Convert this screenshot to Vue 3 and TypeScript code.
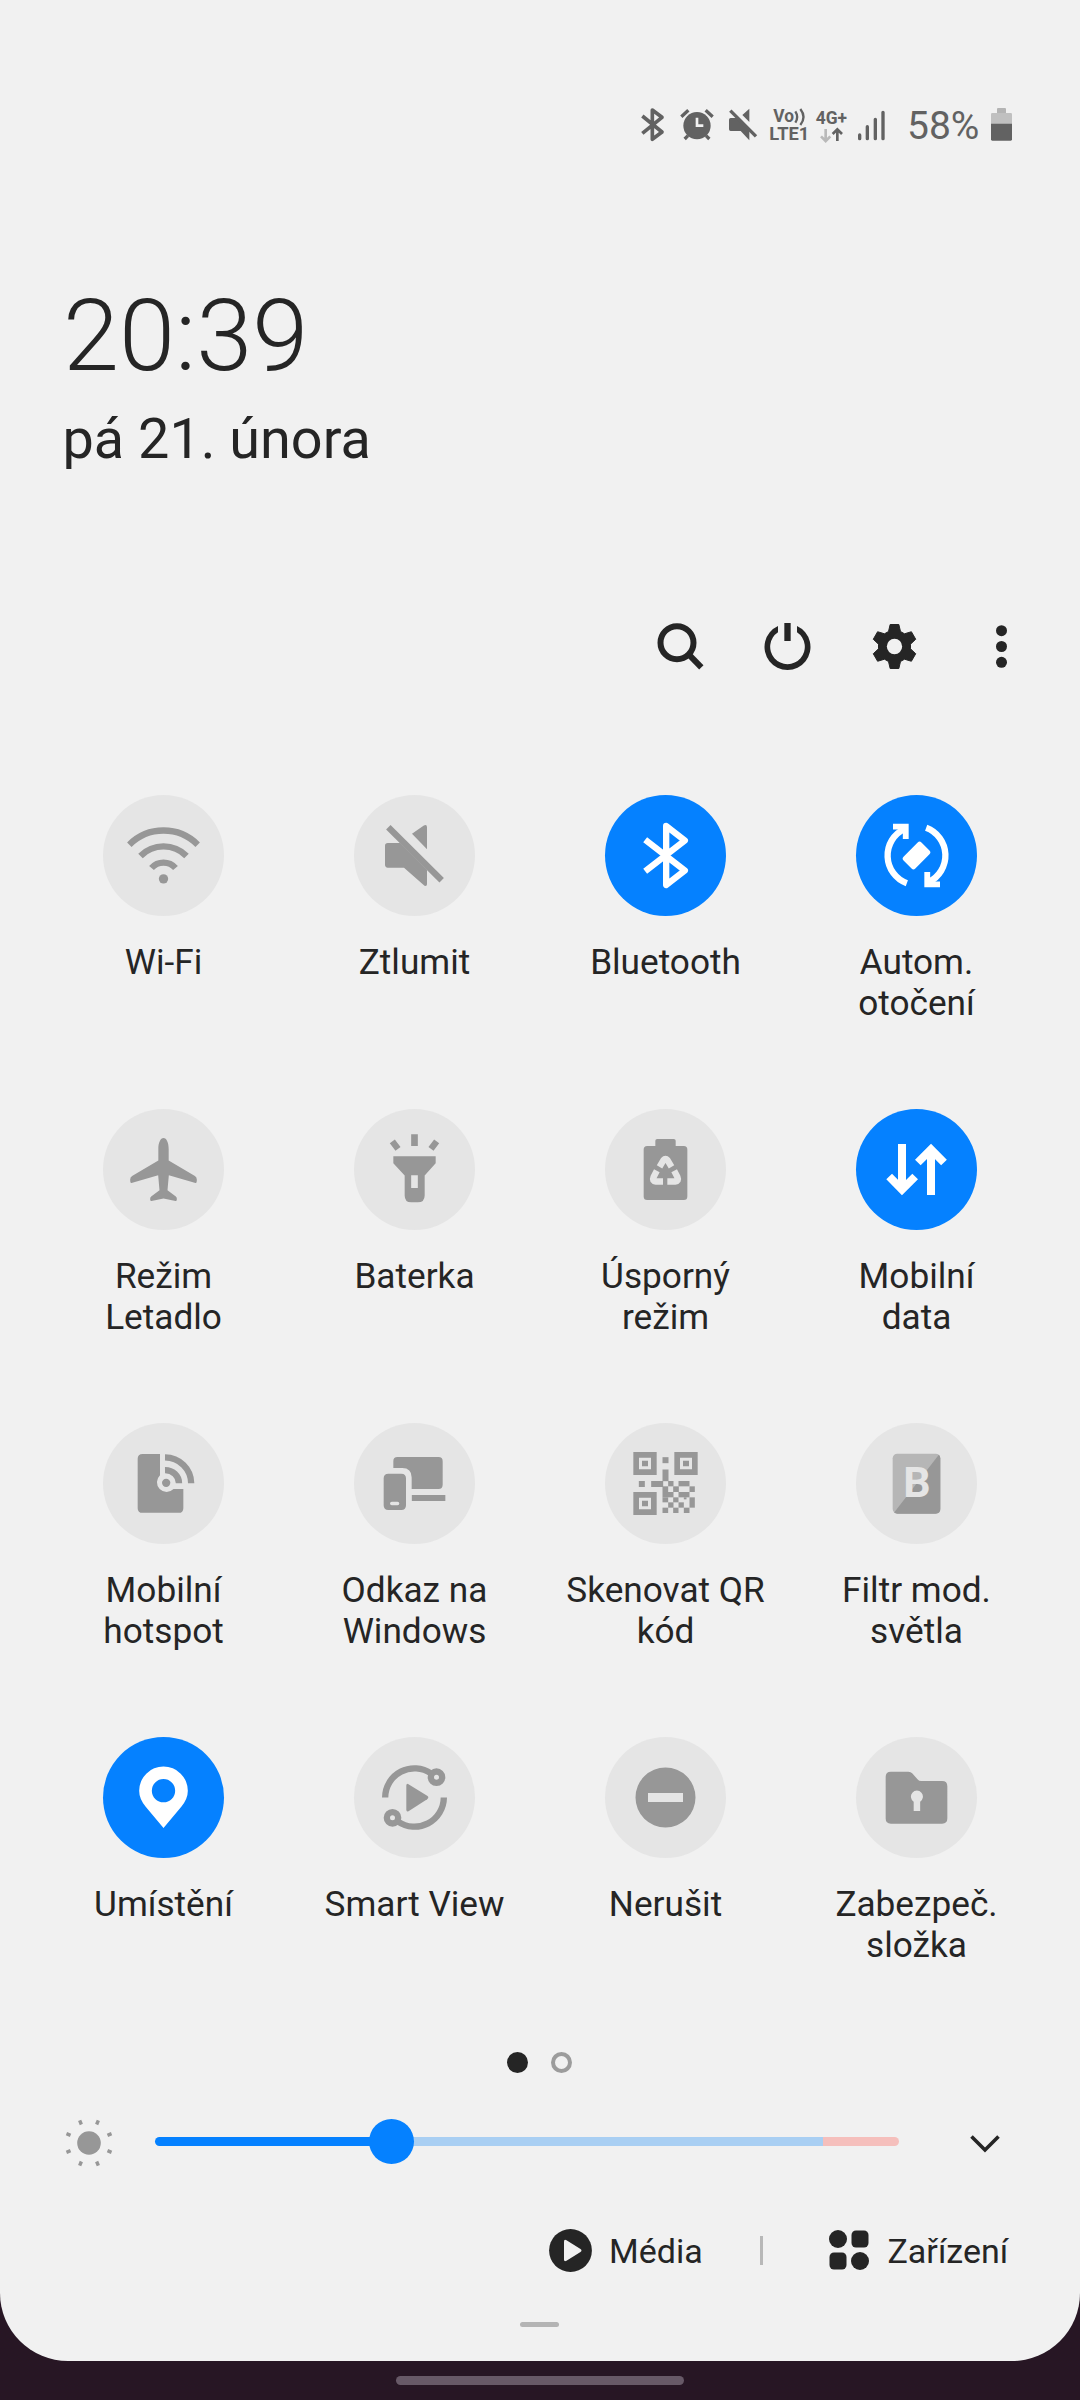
<script setup lang="ts">
interface Tile {
  id: string
  label: string[]
  on?: boolean
}

const tiles: Tile[] = [
  { id: 'wifi', label: ['Wi-Fi'] },
  { id: 'mute', label: ['Ztlumit'] },
  { id: 'bluetooth', label: ['Bluetooth'], on: true },
  { id: 'rotate', label: ['Autom.', 'otočení'], on: true },
  { id: 'plane', label: ['Režim', 'Letadlo'] },
  { id: 'torch', label: ['Baterka'] },
  { id: 'saver', label: ['Úsporný', 'režim'] },
  { id: 'data', label: ['Mobilní', 'data'], on: true },
  { id: 'hotspot', label: ['Mobilní', 'hotspot'] },
  { id: 'link', label: ['Odkaz na', 'Windows'] },
  { id: 'qr', label: ['Skenovat QR', 'kód'] },
  { id: 'filter', label: ['Filtr mod.', 'světla'] },
  { id: 'location', label: ['Umístění'], on: true },
  { id: 'smart', label: ['Smart View'] },
  { id: 'dnd', label: ['Nerušit'] },
  { id: 'folder', label: ['Zabezpeč.', 'složka'] },
]

// Six-toothed gear outline: one tooth repeated every 60 degrees.
const tooth: [number, number][] = [[-18, -45], [-13, -66], [13, -66], [18, -45]]
const gear = Array.from({ length: 6 }, (_, k) => {
  const a = (k * Math.PI) / 3
  return tooth
    .map(([x, y]) => `${(x * Math.cos(a) - y * Math.sin(a)).toFixed(2)},${(x * Math.sin(a) + y * Math.cos(a)).toFixed(2)}`)
    .join(' ')
}).join(' ')

// Data modules of the QR glyph, as [x, y, w, h].
const modules: number[][] = [
  [-9, -79, 18, 18], [-9, -42, 18, 35], [-80, -7.5, 18, 18], [-43, -7.5, 36, 18],
  [8, -7.5, 16, 16], [39, -7.5, 33, 16],
  [-9, 8.5, 17, 17], [23, 8.5, 17, 17], [72, 8.5, 16, 17],
  [-9, 25.5, 33, 16], [39, 25.5, 33, 16],
  [-9, 41.5, 17, 15], [23, 41.5, 16, 15], [55, 41.5, 8, 6], [72, 41.5, 16, 31],
  [8, 56.5, 16, 16], [39, 56.5, 16, 16],
  [-9, 72.5, 17, 16], [23, 72.5, 16, 16], [55, 72.5, 17, 16],
]
const finders: number[][] = [[-61.5, -60], [61.5, -60], [-61.5, 60]]
const rayAngles = [22.5, 67.5, 112.5, 157.5, 202.5, 247.5, 292.5, 337.5]
const brightness = 236.5
</script>

<template>
  <main class="screen">
    <section class="panel">
      <header class="status">
        <svg class="s-bt" viewBox="60 45 78 120"><path d="M67 78 L126 126 L97 148 V60 L126 82 L67 130" fill="none" stroke="#626262" stroke-width="11" stroke-linejoin="round" /></svg>
        <svg class="s-alarm" viewBox="180 45 102 120">
          <circle cx="231" cy="107" r="41" fill="#626262" />
          <path d="M184 80 L205 61 M278 80 L257 61 M204 137 L194 147 M258 137 L268 147" stroke="#626262" stroke-width="10" />
          <path d="M231 83 V107 H250" fill="none" stroke="#f1f1f1" stroke-width="8" />
        </svg>
        <svg class="s-mute" viewBox="324 45 90 120">
          <path d="M332 84 H351 L388 121 V151 L362 123 H332 Q327 123 327 118 V89 Q327 84 332 84Z M367 75 L388 56 V96Z" fill="#626262" />
          <path d="M331 62 L408 139" stroke="#626262" stroke-width="10" />
        </svg>
        <svg class="s-volte" viewBox="447 45 123 120">
          <text x="460" y="97" font-size="53" textLength="62" lengthAdjust="spacingAndGlyphs">Vo</text>
          <text x="448" y="150" font-size="56" textLength="120" lengthAdjust="spacingAndGlyphs">LTE1</text>
          <path d="M526 64 Q537 81 526 98 M541 57 Q560 81 541 105" fill="none" stroke="#626262" stroke-width="7" />
        </svg>
        <svg class="s-4g" viewBox="585 45 99 120">
          <text x="587" y="101" font-size="56" textLength="94" lengthAdjust="spacingAndGlyphs">4G+</text>
          <path d="M617 117 V152 M603 139 L617 153 L631 139" fill="none" stroke="#b9b9b9" stroke-width="8" />
          <path d="M652 153 V119 M638 132 L652 118 L666 132" fill="none" stroke="#626262" stroke-width="8" />
        </svg>
        <svg class="s-signal" viewBox="711 45 87 120"><path d="M719 135 V146 M742 110 V146 M766 88 V146 M789 67 V146" stroke="#626262" stroke-width="10" stroke-linecap="round" /></svg>
        <span class="pct">58%</span>
        <svg class="s-batt" viewBox="1110 45 69 120">
          <path d="M1131 57 Q1131 54 1134 54 H1155 Q1158 54 1158 57 V69 H1131Z" fill="#b4b4b4" />
          <path d="M1113 102 V73 Q1113 69 1117 69 H1172 Q1176 69 1176 73 V102Z" fill="#c0c0c0" />
          <path d="M1113 101 H1176 V148 Q1176 152 1172 152 H1117 Q1113 152 1113 148Z" fill="#626262" />
        </svg>
      </header>

      <div class="clock">20:39</div>
      <div class="date">pá 21. února</div>

      <nav class="tools">
        <svg viewBox="-10 69 321 141"><circle cx="140" cy="128" r="49.5" fill="none" stroke="#252525" stroke-width="18" /><path d="M175 163 L213 202" stroke="#252525" stroke-width="18" /></svg>
        <svg viewBox="312 69 321 141"><path d="M444 78 A69 69 0 1 0 501 78 V97 A52 52 0 1 1 444 97Z M463 69 H482 V123 H463Z" fill="#252525" /></svg>
        <svg viewBox="633 69 321 141">
          <g transform="translate(793.5 139.5)">
            <polygon :points="gear" fill="#252525" stroke="#252525" stroke-width="3" stroke-linejoin="round" />
            <circle r="23" fill="#f1f1f1" />
          </g>
        </svg>
        <svg viewBox="954 69 321 141"><g fill="#252525"><circle cx="1114.5" cy="92" r="16.5" /><circle cx="1114.5" cy="139.5" r="16.5" /><circle cx="1114.5" cy="187" r="16.5" /></g></svg>
      </nav>

      <section class="grid">
        <div v-for="t in tiles" :key="t.id" class="tile" :class="{ on: t.on }">
          <svg class="disc" viewBox="-181.5 -181.5 363 363">
            <g v-if="t.id === 'wifi'" class="line">
              <path d="M-102.5 -32.5 A145 145 0 0 1 102.5 -32.5 M-69 1.5 A97 97 0 0 1 69 1.5 M-36 37.5 A48 48 0 0 1 36 37.5" />
              <circle class="solid" cy="70" r="14" />
            </g>
            <g v-else-if="t.id === 'mute'">
              <path class="solid" d="M-80 -37.5 H-43 L37.5 43 V86 Q37.5 93 30 91 L-31.5 36.5 H-80 Q-88.5 36.5 -88.5 28 V-29 Q-88.5 -37.5 -80 -37.5Z M-7.5 -65 L28 -90 Q37.5 -94 37.5 -85 V-18.5Z" />
              <path class="line" d="M-78.5 -84.5 L81.5 74.5" />
            </g>
            <path v-else-if="t.id === 'bluetooth'" class="line" stroke-linejoin="round" d="M-61 -47 L58 45 L2 88.5 V-88.5 L58 -45 L-61 47" />
            <g v-else-if="t.id === 'rotate'">
              <g v-for="r in [0, 180]" :key="r" :transform="`rotate(${r})`">
                <path class="line" d="M-29 83 A88.5 88.5 0 0 1 -36 -80" />
                <path class="solid" d="M-70.5 -95.5 H-23.5 V-49.5 H-41 V-78 H-70.5Z" />
              </g>
              <rect class="solid" x="-38" y="-25" width="76" height="50" rx="8" transform="rotate(-45)" />
            </g>
            <path v-else-if="t.id === 'plane'" class="solid" d="M0 -94.5 C9 -94.5 15.5 -80 15.5 -62 V-27 L93 19 Q100 23 100 30 Q100 42 96 40.5 L16 17 L12 62 L37 81 Q41 84 40 90 Q39.5 95.5 36 94.5 L0 87 L-36 94.5 Q-39.5 95.5 -40 90 Q-41 84 -37 81 L-12 62 L-16 17 L-96 40.5 Q-100 42 -100 30 Q-100 23 -93 19 L-15.5 -27 V-62 C-15.5 -80 -9 -94.5 0 -94.5Z" />
            <g v-else-if="t.id === 'torch'">
              <path class="solid" fill-rule="evenodd" d="M-63.5 -39.5 H63.5 V-18.5 L30.5 18 V78 Q30.5 98.5 10 98.5 H-10 Q-29.5 98.5 -29.5 78 V18 L-63.5 -18.5Z M-10 17.5 V55.5 H10 V17.5Z M-10 -105.5 H10 V-70.5 H-10Z" />
              <path class="line" d="M-66.5 -84.5 L-49.5 -62 M66.5 -84.5 L49.5 -62" />
            </g>
            <g v-else-if="t.id === 'saver'">
              <path class="solid" d="M-55 -70.5 H-30.5 V-86 Q-30.5 -91.5 -25 -91.5 H25 Q30.5 -91.5 30.5 -86 V-70.5 H55 Q65.5 -70.5 65.5 -60 V81 Q65.5 91.5 55 91.5 H-55 Q-65.5 91.5 -65.5 81 V-60 Q-65.5 -70.5 -55 -70.5Z" />
              <path class="cut" d="M-18 -8 L-6 -28 Q0 -35 6 -28 L18 -8 M-26 4 L-36 23 Q-41 35 -29 36 H-7.5 M26 4 L36 23 Q41 35 29 36 H5.5" />
            </g>
            <path v-else-if="t.id === 'data'" class="line bold" d="M-43.5 -76.5 V62 M-82 21 L-43.5 60.5 L-4 21 M43.5 76.5 V-62 M4 -21 L43.5 -60.5 L82.5 -21" />
            <g v-else-if="t.id === 'hotspot'">
              <path class="solid" d="M-62.5 -88.5 H-10.5 V-25 A29 29 0 1 0 30 16.5 H59.5 V74 Q59.5 88 45.5 88 H-62.5 Q-77.5 88 -77.5 74 V-74 Q-77.5 -88.5 -62.5 -88.5Z" />
              <circle class="solid" cx="8" cy="-2" r="12.5" />
              <path class="line" d="M4.5 -40 A41.5 39 0 0 1 46.5 -1 M4.5 -78.5 A79 78 0 0 1 83 -1" />
            </g>
            <path v-else-if="t.id === 'link'" class="solid" fill-rule="evenodd" d="M-63.5 -46.5 V-67 Q-63.5 -79.5 -51 -79.5 H72 Q84.5 -79.5 84.5 -67 V4 Q84.5 16.5 72 16.5 H-8.5 V-18 Q-8.5 -46.5 -37 -46.5Z M-8 34.5 H92.5 V52.5 H-8Z M-78.5 -29.5 H-39.5 Q-25.5 -29.5 -25.5 -15.5 V65.5 Q-25.5 79.5 -39.5 79.5 H-78.5 Q-92.5 79.5 -92.5 65.5 V-15.5 Q-92.5 -29.5 -78.5 -29.5Z M-68 54.5 A5.5 5.5 0 0 0 -68 65.5 H-51 A5.5 5.5 0 0 0 -51 54.5Z" />
            <g v-else-if="t.id === 'qr'">
              <g v-for="(f, i) in finders" :key="'f' + i" :transform="`translate(${f[0]} ${f[1]})`">
                <path class="solid" fill-rule="evenodd" d="M-35 -34.5 H35 V34.5 H-35Z M-18 -17.5 V17.5 H18 V-17.5Z M-9 -8.5 H9 V8.5 H-9Z" />
              </g>
              <rect v-for="(m, i) in modules" :key="i" class="solid" :x="m[0]" :y="m[1]" :width="m[2]" :height="m[3]" />
            </g>
            <g v-else-if="t.id === 'filter'">
              <rect x="-71.5" y="-89.5" width="143" height="180" rx="14" fill="#b6b6b6" />
              <path class="solid" d="M67 -86 Q71.5 -82 71.5 -75 V76.5 Q71.5 90.5 57.5 90.5 H-57.5 Q-63 90.5 -67 87Z" />
              <text class="letter" x="-40" y="41.5" textLength="82" lengthAdjust="spacingAndGlyphs">B</text>
            </g>
            <path v-else-if="t.id === 'location'" class="solid" fill-rule="evenodd" d="M0 91.5 L-54 27 Q-73 4 -73 -20 A73 73 0 0 1 73 -20 Q73 4 54 27Z M35 -20.5 A35 35 0 1 0 -35 -20.5 A35 35 0 1 0 35 -20.5Z" />
            <g v-else-if="t.id === 'smart'">
              <g v-for="r in [0, 180]" :key="r" class="line" :transform="`rotate(${r})`">
                <path d="M-88 0 A88 88 0 0 1 50 -72" />
                <circle cx="66" cy="-61" r="17" />
              </g>
              <path class="solid" d="M-24.5 -36 Q-24.5 -43 -18 -40 L38 -5 Q45 0 38 5 L-18 41 Q-24.5 44 -24.5 37Z" />
            </g>
            <path v-else-if="t.id === 'dnd'" class="solid" fill-rule="evenodd" d="M-90 0 A90 90 0 1 1 90 0 A90 90 0 1 1 -90 0Z M-52.5 -13.5 V13.5 H52.5 V-13.5Z" />
            <path v-else class="solid" fill-rule="evenodd" d="M-77 -77.5 H-24 Q-17 -77.5 -13 -73 L3 -55 Q8 -49.5 14 -49.5 H77 Q92.5 -49.5 92.5 -34 V63 Q92.5 78.5 77 78.5 H-77 Q-92.5 78.5 -92.5 63 V-62 Q-92.5 -77.5 -77 -77.5Z M-8.5 12.5 V40.5 H11 V12.5 A18 18 0 1 0 -8.5 12.5Z" />
          </svg>
          <p class="label"><span v-for="l in t.label" :key="l">{{ l }}</span></p>
        </div>
      </section>

      <div class="pager"><i class="dot" /><i class="dot ring" /></div>

      <div class="bright">
        <svg class="sun" viewBox="-25 -25 50 50">
          <circle r="11.8" fill="#979797" />
          <path v-for="a in rayAngles" :key="a" d="M0 -20 V-24.4" stroke="#979797" stroke-width="3.4" :transform="`rotate(${a})`" />
        </svg>
        <div class="slider">
          <div class="fill" :style="{ width: brightness + 'px' }"><i class="thumb" /></div>
          <div class="rest" />
          <div class="hot" />
        </div>
        <svg class="chev" viewBox="0 0 30 18"><path d="M1.500 1.500 L15 15 L28.500 1.500" fill="none" stroke="#252525" stroke-width="3.6" /></svg>
      </div>

      <footer class="actions">
        <svg class="play" viewBox="-21.5 -21.5 43 43"><circle r="21.4" fill="#252525" /><path d="M-6.5 -9 Q-6.5 -11.5 -4 -10.2 L10 -1.5 Q12 0 10 1.5 L-4 10.2 Q-6.5 11.5 -6.5 9Z" fill="#f1f1f1" /></svg>
        <span class="media">Média</span>
        <i class="sep" />
        <svg class="dev" viewBox="0 0 40 40"><g fill="#252525"><circle cx="9" cy="9" r="9" /><rect x="22.5" y="0.5" width="17" height="17" rx="4.5" /><rect x="0.5" y="22.5" width="17" height="17" rx="4.5" /><circle cx="31" cy="31" r="9" /></g></svg>
        <span>Zařízení</span>
      </footer>

      <i class="handle" />
    </section>
    <div class="navbar"><i /></div>
  </main>
</template>

<style>
body {
  margin: 0;
  background: #271624;
}
</style>

<style scoped>
.screen {
  width: 1080px;
  height: 2400px;
  overflow: hidden;
  background: #271624;
  font-family: Roboto, "Noto Sans", sans-serif;
  color: #252525;
}
.panel {
  box-sizing: border-box;
  height: 2361px;
  background: #f1f1f1;
  border-radius: 0 0 68px 68px;
  display: flex;
  flex-direction: column;
}
svg { display: block; flex: none; overflow: visible; }

.status {
  height: 40px;
  padding: 105px 67px 0 0;
  display: flex;
  justify-content: flex-end;
  color: #626262;
}
.status svg { height: 40px; }
.status text { fill: #626262; font-weight: 700; }
.s-bt { width: 26px; margin-right: 14px; }
.s-alarm { width: 34px; margin-right: 14px; }
.s-mute { width: 30px; margin-right: 11px; }
.s-volte { width: 41px; margin-right: 5px; }
.s-4g { width: 33px; margin-right: 9px; }
.s-signal { width: 29px; }
.pct {
  width: 104px;
  box-sizing: border-box;
  padding-left: 21px;
  font-size: 39px;
  line-height: 43px;
}
.s-batt { width: 23px; }

.clock {
  margin: 136px 0 0 63px;
  height: 110px;
  line-height: 110px;
  font-size: 101px;
  font-weight: 300;
}
.date {
  margin: 15px 0 0 62.5px;
  height: 66px;
  line-height: 66px;
  font-size: 55.8px;
}

.tools {
  margin-top: 151px;
  padding-right: 25px;
  display: flex;
  justify-content: flex-end;
}
.tools svg { width: 107px; height: 47px; }

.grid {
  margin-top: 125px;
  padding: 0 38px;
  display: grid;
  grid-template-columns: repeat(4, 251px);
  grid-auto-rows: 314px;
}
.tile { display: flex; flex-direction: column; align-items: center; }
.disc {
  width: 121px;
  height: 121px;
  border-radius: 50%;
  background: #e5e5e5;
  color: #979797;
}
.on .disc { background: #0581ff; color: #fff; }
.solid { fill: currentColor; stroke: none; }
.line { fill: none; stroke: currentColor; stroke-width: 19px; }
.line.bold { stroke-width: 24px; }
.cut { fill: none; stroke: #e5e5e5; stroke-width: 19px; }
.letter { fill: #e5e5e5; font-size: 129px; font-weight: 700; }
.label {
  margin: 26px 0 0;
  display: flex;
  flex-direction: column;
  align-items: center;
  font-size: 35.2px;
  line-height: 41px;
  white-space: nowrap;
}

.pager {
  margin-top: 1px;
  padding-right: 1px;
  display: flex;
  justify-content: center;
  gap: 23px;
}
.dot {
  box-sizing: border-box;
  width: 21px;
  height: 21px;
  border-radius: 50%;
  background: #252525;
}
.ring { background: none; border: 4px solid #9c9c9c; }

.bright {
  height: 49px;
  margin-top: 44px;
  padding: 0 80px 0 64px;
  display: flex;
  align-items: center;
}
.sun { width: 50px; height: 50px; margin: 3px 41px 0 0; }
.slider {
  width: 744px;
  height: 9px;
  display: flex;
  margin-right: 71px;
}
.fill {
  position: relative;
  background: #0581ff;
  border-radius: 4.5px 0 0 4.5px;
}
.thumb {
  position: absolute;
  right: -22.5px;
  top: -18px;
  width: 45px;
  height: 45px;
  border-radius: 50%;
  background: #0581ff;
}
.rest { flex: 1; background: #a9cff3; }
.hot { width: 76px; background: #f5bfbc; border-radius: 0 4.5px 4.5px 0; }
.chev { width: 30px; height: 18px; margin-top: 5px; }

.actions {
  height: 44px;
  margin-top: 62px;
  padding-left: 549px;
  display: flex;
  align-items: center;
  font-size: 34px;
  line-height: 44px;
}
.actions span { padding-top: 2px; }
.play { width: 43px; height: 43px; margin-right: 17px; }
.media { width: 150.5px; }
.sep { width: 3px; height: 29px; background: #b8b8b8; margin-right: 66px; }
.dev { width: 40px; height: 40px; margin-right: 19px; }

.handle {
  width: 39px;
  height: 5px;
  margin: 50px 0 0 520px;
  border-radius: 3px;
  background: #b4b4b4;
}
.navbar { display: flex; justify-content: center; padding-top: 15px; }
.navbar i { width: 288px; height: 9px; border-radius: 5px; background: #675967; }
</style>
